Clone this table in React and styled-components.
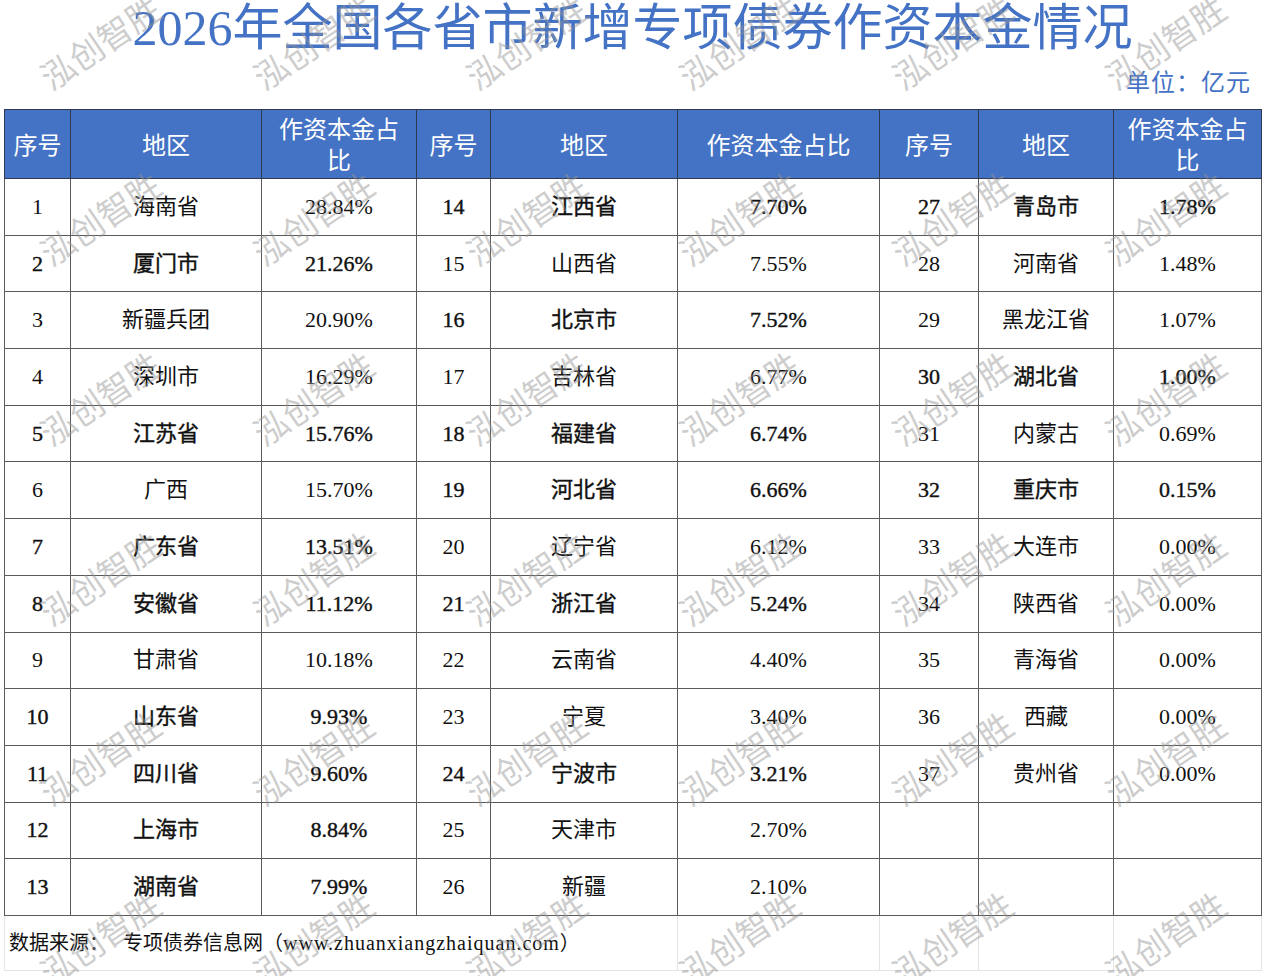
import React from "react";
import styled, { createGlobalStyle } from "styled-components";

const Global = createGlobalStyle`
  html, body { margin: 0; padding: 0; background: #fff; }
  body {
    font-family: "Liberation Serif", "Noto Sans CJK SC", serif;
    color: #111;
    overflow: hidden;
  }
`;

const Page = styled.div`
  position: relative;
  width: 1265px;
  height: 976px;
  overflow: hidden;
  background: #fff;
`;

const Head = styled.header`
  height: 109px;
  display: flex;
  flex-direction: column;
`;

const Title = styled.h1`
  margin: 0;
  height: 58px;
  font-size: 50px;
  line-height: 56px;
  font-weight: 400;
  text-align: center;
  color: #4472c4;
  white-space: nowrap;
`;

const Unit = styled.div`
  align-self: flex-end;
  margin-right: 14px;
  margin-top: 10px;
  font-size: 24px;
  line-height: 30px;
  color: #4472c4;
  letter-spacing: 1px;
`;

const Table = styled.table`
  table-layout: fixed;
  border-collapse: collapse;
  width: 1257px;
  margin-left: 4px;
`;

const Col = styled.col`
  width: ${(p) => p.$w}px;
`;

const HeadRow = styled.tr`
  height: 69px;
`;

const Th = styled.th`
  padding: 0 8px;
  background: #4472c4;
  color: #fff;
  font-size: 24px;
  line-height: 31px;
  font-weight: 400;
  text-align: center;
  vertical-align: middle;
  border: 1px solid #2f3a4f;
`;

const Label = styled.span`
  display: inline-block;
  transform: translateY(2px);
`;

const Row = styled.tr`
  height: 56.7px;
`;

const Td = styled.td`
  padding: 0;
  border: 1px solid #5a5a5a;
  text-align: center;
  vertical-align: middle;
  font-size: 22px;
  line-height: 26px;
  font-weight: 400;
  color: #111;
  white-space: nowrap;
  -webkit-text-stroke: ${(p) => (p.$bold ? "0.4px #111" : "0")};
`;

const FootRow = styled.tr`
  height: 55px;
`;

const FootCell = styled.td`
  padding: 0 0 0 4px;
  border-left: 1px solid #e4e4e4;
  border-right: 1px solid #e4e4e4;
  border-bottom: 1px solid #e4e4e4;
  font-size: 20px;
  line-height: 24px;
  white-space: nowrap;
  color: #111;
  vertical-align: middle;
`;

const Source = styled.span`
  margin-left: 14px;
`;

const Url = styled.span`
  letter-spacing: 1px;
`;

const MarkLayer = styled.div`
  position: absolute;
  inset: 0;
  pointer-events: none;
`;

const Mark = styled.div`
  position: absolute;
  width: 160px;
  margin-left: -80px;
  margin-top: -20px;
  text-align: center;
  font-family: "Noto Sans CJK SC", sans-serif;
  font-size: 34px;
  line-height: 40px;
  color: rgba(150, 150, 150, 0.48);
  transform: rotate(-34deg);
  white-space: nowrap;
`;

const widths = [66, 191, 155, 74, 187, 202, 99, 135, 148];

const g1 = [
  ["1", "海南省", "28.84%", false],
  ["2", "厦门市", "21.26%", true],
  ["3", "新疆兵团", "20.90%", false],
  ["4", "深圳市", "16.29%", false],
  ["5", "江苏省", "15.76%", true],
  ["6", "广西", "15.70%", false],
  ["7", "广东省", "13.51%", true],
  ["8", "安徽省", "11.12%", true],
  ["9", "甘肃省", "10.18%", false],
  ["10", "山东省", "9.93%", true],
  ["11", "四川省", "9.60%", true],
  ["12", "上海市", "8.84%", true],
  ["13", "湖南省", "7.99%", true],
];
const g2 = [
  ["14", "江西省", "7.70%", true],
  ["15", "山西省", "7.55%", false],
  ["16", "北京市", "7.52%", true],
  ["17", "吉林省", "6.77%", false],
  ["18", "福建省", "6.74%", true],
  ["19", "河北省", "6.66%", true],
  ["20", "辽宁省", "6.12%", false],
  ["21", "浙江省", "5.24%", true],
  ["22", "云南省", "4.40%", false],
  ["23", "宁夏", "3.40%", false],
  ["24", "宁波市", "3.21%", true],
  ["25", "天津市", "2.70%", false],
  ["26", "新疆", "2.10%", false],
];
const g3 = [
  ["27", "青岛市", "1.78%", true],
  ["28", "河南省", "1.48%", false],
  ["29", "黑龙江省", "1.07%", false],
  ["30", "湖北省", "1.00%", true],
  ["31", "内蒙古", "0.69%", false],
  ["32", "重庆市", "0.15%", true],
  ["33", "大连市", "0.00%", false],
  ["34", "陕西省", "0.00%", false],
  ["35", "青海省", "0.00%", false],
  ["36", "西藏", "0.00%", false],
  ["37", "贵州省", "0.00%", false],
];

const headers = ["序号", "地区", "作资本金占比"];

function Group({ item }) {
  if (!item) {
    return (
      <>
        <Td />
        <Td />
        <Td />
      </>
    );
  }
  const [n, r, p, b] = item;
  return (
    <>
      <Td $bold={b}>{n}</Td>
      <Td $bold={b}>{r}</Td>
      <Td $bold={b}>{p}</Td>
    </>
  );
}

const markXs = [100, 313, 526, 739, 952, 1165];
const markYs = [42, 218, 398, 578, 758, 938];

export default function App() {
  return (
    <Page>
      <Global />
      <Head>
        <Title>2026年全国各省市新增专项债券作资本金情况</Title>
        <Unit>单位：亿元</Unit>
      </Head>
      <Table>
        <colgroup>
          {widths.map((w, i) => (
            <Col key={i} $w={w} />
          ))}
        </colgroup>
        <thead>
          <HeadRow>
            {[0, 1, 2].flatMap((g) =>
              headers.map((h) => (
                <Th key={g + h}>
                  <Label>{h}</Label>
                </Th>
              ))
            )}
          </HeadRow>
        </thead>
        <tbody>
          {g1.map((item, i) => (
            <Row key={i}>
              <Group item={item} />
              <Group item={g2[i]} />
              <Group item={g3[i]} />
            </Row>
          ))}
          <FootRow>
            <FootCell colSpan={5}>
              数据来源：<Source>专项债券信息网</Source>（<Url>www.zhuanxiangzhaiquan.com</Url>）
            </FootCell>
            <FootCell />
            <FootCell />
            <FootCell />
            <FootCell />
          </FootRow>
        </tbody>
      </Table>
      <MarkLayer>
        {markYs.map((y) =>
          markXs.map((x) => (
            <Mark key={x + "-" + y} style={{ left: x, top: y }}>
              泓创智胜
            </Mark>
          ))
        )}
      </MarkLayer>
    </Page>
  );
}
